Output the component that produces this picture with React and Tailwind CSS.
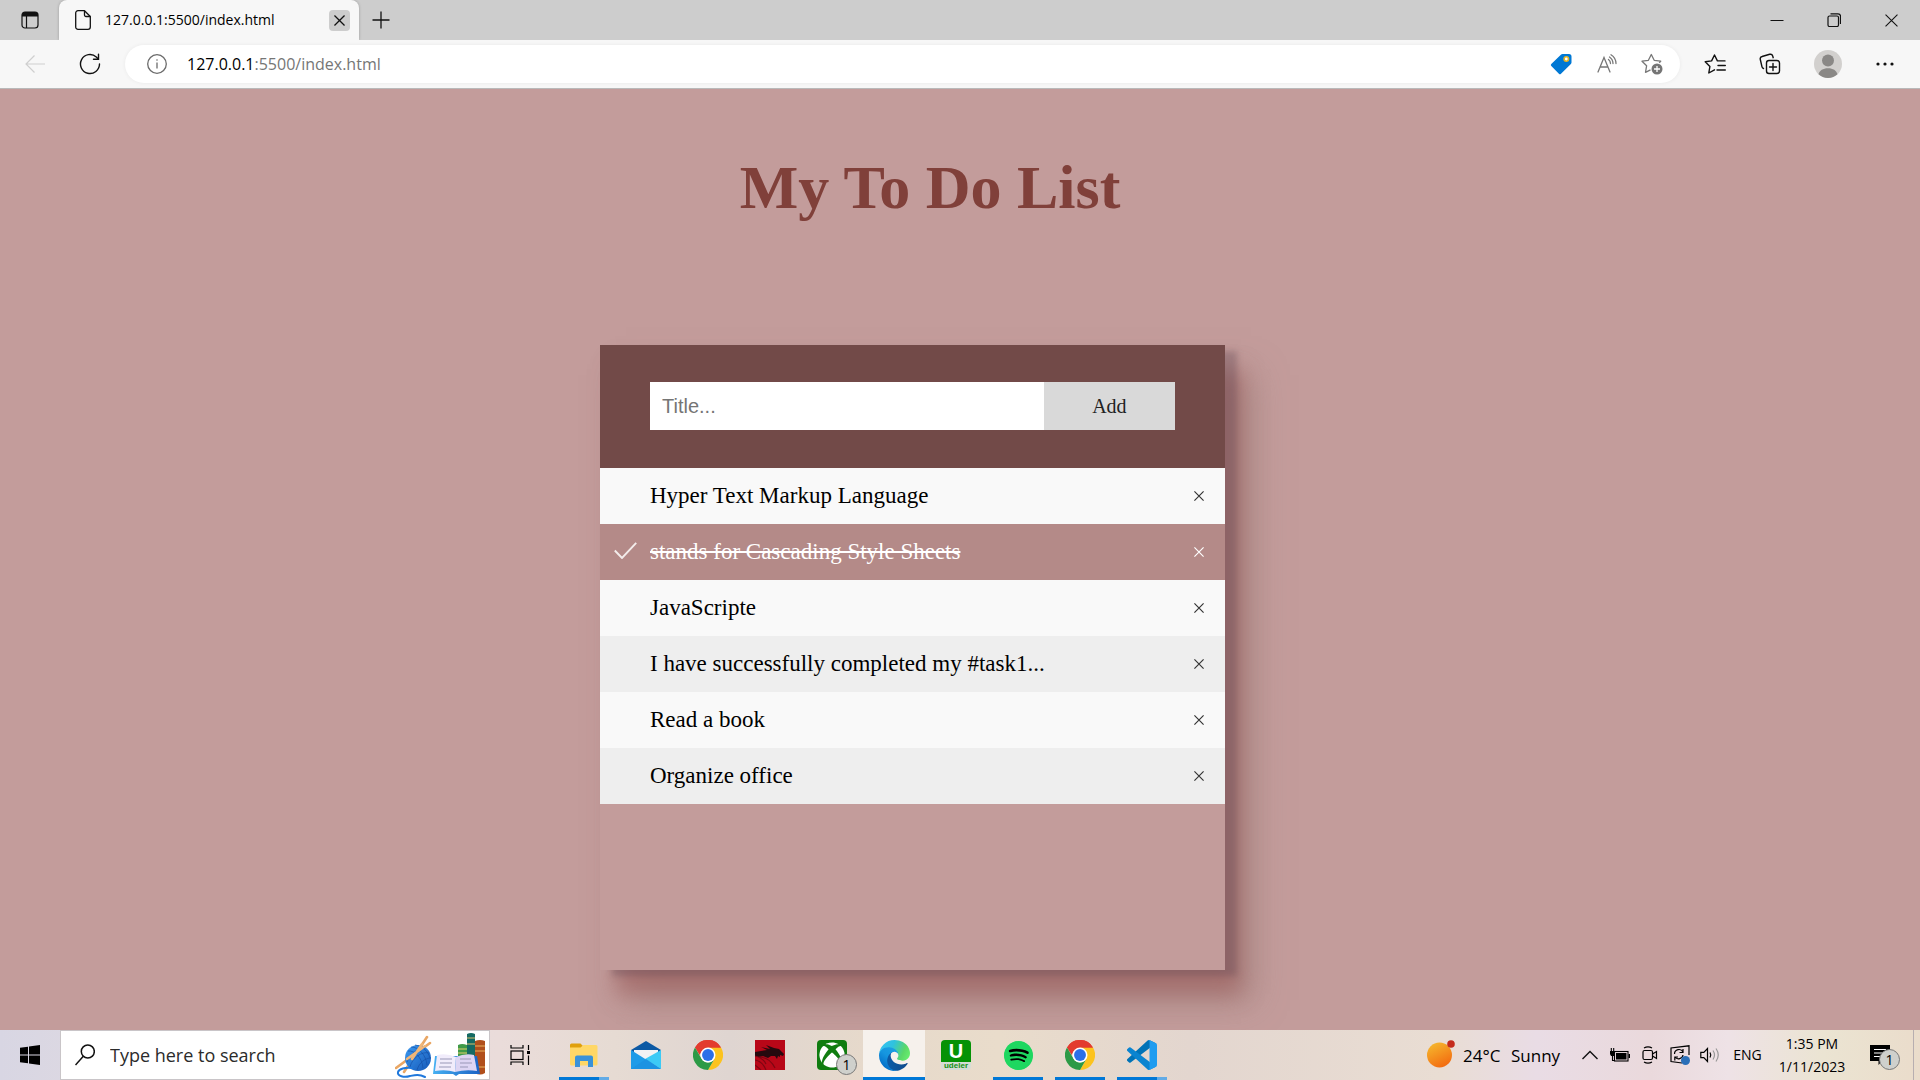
import React, { useState } from "react";
import { FaSpotify, FaXbox } from "react-icons/fa";

const UI = "font-['Open_Sans',sans-serif]";

/* ---------- browser icons ---------- */

const TabActionsIcon = () => (
  <svg width="18" height="18" viewBox="0 0 18 18" fill="none">
    <rect x="1" y="1" width="16" height="16" rx="3" stroke="#111" strokeWidth="1.2" />
    <path d="M1 4a3 3 0 0 1 3-3h10a3 3 0 0 1 3 3v1.5H1z" fill="#111" />
    <path d="M5.5 5v12" stroke="#111" strokeWidth="1.2" />
  </svg>
);

const PageIcon = () => (
  <svg width="16" height="20" viewBox="0 0 16 20" fill="none" stroke="#111" strokeWidth="1.3" strokeLinejoin="round">
    <path d="M3 .7h6.5L15.300 6.500V17a2.300 2.300 0 0 1-2.300 2.300H3A2.300 2.300 0 0 1 .7 17V3A2.300 2.300 0 0 1 3 .7z" />
    <path d="M9.500 .7V5a1.500 1.500 0 0 0 1.500 1.500h4.300" />
  </svg>
);

const CrossIcon = ({ size, color = "#111", width = 1.2 }) => (
  <svg width={size} height={size} viewBox="0 0 12 12" fill="none" stroke={color} strokeWidth={width}>
    <path d="M.5.5l11 11M11.5.5l-11 11" />
  </svg>
);

const PlusIcon = () => (
  <svg width="18" height="18" viewBox="0 0 18 18" fill="none" stroke="#111" strokeWidth="1.300">
    <path d="M9 .5v17M.5 9h17" />
  </svg>
);

const BackIcon = () => (
  <svg width="20" height="20" viewBox="0 0 20 20" fill="none" stroke="#cfcfcf" strokeWidth="1.2">
    <path d="M20 10H1M9.500 1.500L1 10l8.500 8.500" />
  </svg>
);

const ReloadIcon = () => (
  <svg width="22" height="22" viewBox="0 0 22 22" fill="none" stroke="#111" strokeWidth="1.4" strokeLinecap="round">
    <path d="M20.500 11a9.500 9.500 0 1 1-3.200-7.100L19.300 6" />
    <path d="M19.500 1.200V6.200H14.500" />
  </svg>
);

const InfoIcon = () => (
  <svg width="20" height="20" viewBox="0 0 20 20" fill="none" stroke="#6b6b6b" strokeWidth="1.3">
    <circle cx="10" cy="10" r="9.300" />
    <path d="M10 8.500v6" />
    <circle cx="10" cy="6" r=".8" fill="#6b6b6b" stroke="none" />
  </svg>
);

const TagIcon = () => (
  <svg width="22" height="22" viewBox="0 0 22 22">
    <path d="M12.500 1H19a2.500 2.500 0 0 1 2.500 2.500V9.500a2 2 0 0 1-.6 1.400L11 20.700a1.500 1.500 0 0 1-2.100 0L1.300 13a1.500 1.500 0 0 1 0-2.100l9.800-9.300A2 2 0 0 1 12.500 1z" fill="#0078d4" />
    <circle cx="16.300" cy="6" r="2.200" fill="#fff" stroke="#e6b422" strokeWidth="1.600" />
  </svg>
);

const ReadAloudIcon = () => (
  <svg width="20" height="20" viewBox="0 0 20 20" fill="none" stroke="#777" strokeWidth="1.3" strokeLinecap="round">
    <path d="M1 18L7 3.500 13 18M3 13h8" />
    <path d="M11.500 5.500a5 5 0 0 1 2 4M12.500 3a8 8 0 0 1 3.500 6.500M14 .8a10.500 10.500 0 0 1 5 8.700" />
  </svg>
);

const AddFavoriteIcon = () => (
  <svg width="22" height="22" viewBox="0 0 22 22" fill="none">
    <path d="M9.500 16.800L4.500 19.300l1.100-6.500L1 8.200l6.400-.9L10.300 1.500l2.900 5.800 6.500.9-1.500 1.500" stroke="#777" strokeWidth="1.3" strokeLinejoin="round" />
    <circle cx="16" cy="16" r="5.500" fill="#757575" />
    <path d="M16 13v6M13 16h6" stroke="#fff" strokeWidth="1.300" />
  </svg>
);

const FavoritesIcon = () => (
  <svg width="22" height="22" viewBox="0 0 22 22" fill="none" stroke="#111" strokeWidth="1.4" strokeLinejoin="round" strokeLinecap="round">
    <path d="M10.500 16.800L4.800 20l1.100-6.500L1.200 8.800l6.400-.9L10.500 2l2.900 5.900h7.600M14 12.500h7.300M13 17h8.300" />
  </svg>
);

const CollectionsIcon = () => (
  <svg width="22" height="22" viewBox="0 0 22 22" fill="none" stroke="#111" strokeWidth="1.4" strokeLinecap="round">
    <rect x="7.500" y="7.500" width="13" height="13" rx="2.500" />
    <path d="M14 10.500v7M10.500 14h7" />
    <path d="M4.500 15.500A2.500 2.500 0 0 1 3 13.800L1.300 6.500a2.500 2.500 0 0 1 1.800-3L10.700 1.300a2.500 2.500 0 0 1 3 1.700l.5 1.700" />
  </svg>
);

const AvatarIcon = () => (
  <svg width="28" height="28" viewBox="0 0 28 28">
    <circle cx="14" cy="14" r="14" fill="#d2d0ce" />
    <circle cx="14" cy="10.500" r="6" fill="#8a8886" />
    <path d="M4.500 24.300C5.500 20.500 9 18.300 14 18.300s8.500 2.200 9.500 6A14 14 0 0 1 14 28a14 14 0 0 1-9.500-3.700z" fill="#8a8886" />
  </svg>
);

const MoreIcon = () => (
  <svg width="18" height="4" viewBox="0 0 18 4" fill="#111">
    <circle cx="2" cy="2" r="1.600" />
    <circle cx="9" cy="2" r="1.600" />
    <circle cx="16" cy="2" r="1.600" />
  </svg>
);

const MinimizeIcon = () => (
  <svg width="14" height="14" viewBox="0 0 14 14" stroke="#111">
    <path d="M.5 7.500h13" />
  </svg>
);

const RestoreIcon = () => (
  <svg width="14" height="14" viewBox="0 0 14 14" fill="none" stroke="#111" strokeWidth="1.200">
    <rect x="1" y="3" width="10.500" height="10.500" rx="1.500" />
    <path d="M3.500.8H11a2.500 2.500 0 0 1 2.500 2.500V11" />
  </svg>
);

/* ---------- taskbar icons ---------- */

const WindowsIcon = () => (
  <svg width="20" height="20" viewBox="0 0 20 20" fill="#000">
    <path d="M0 2.800L8 1.700v7.800H0zM9 1.500L20 0v9.500H9zM0 10.500h8v7.800l-8-1.100zM9 10.500h11V20L9 18.500z" />
  </svg>
);

const SearchIcon = () => (
  <svg width="20" height="22" viewBox="0 0 20 22" fill="none" stroke="#111" strokeWidth="1.500">
    <circle cx="12.800" cy="7.500" r="6.500" />
    <path d="M8.300 12.300L.5 21" />
  </svg>
);

const YarnAndBooks = () => (
  <svg width="92" height="48" viewBox="0 0 92 48" fill="none">
    <defs>
      <linearGradient id="yarn" x1="0" y1="0" x2="1" y2="1">
        <stop offset="0" stopColor="#3d9af0" />
        <stop offset="1" stopColor="#1558b8" />
      </linearGradient>
      <linearGradient id="cover" x1="0" y1="0" x2="1" y2="0">
        <stop offset="0" stopColor="#45b0f2" />
        <stop offset="1" stopColor="#1b62c4" />
      </linearGradient>
    </defs>
    <path d="M32 6L9 41M35 12L1 37" stroke="#e9a765" strokeWidth="2.600" strokeLinecap="round" />
    <circle cx="23" cy="27" r="13" fill="url(#yarn)" />
    <path d="M13 20c6-1 14 6 15 17M16 16c8 0 15 8 16 18M20 14c7 1 13 6 15 13M12 31c3-8 12-15 18-14M15 36c2-9 12-16 19-14M22 39c2-7 8-12 14-12" stroke="#1650a8" strokeWidth=".7" />
    <path d="M27 13L17 28M30 15L12 28" stroke="#f0b678" strokeWidth="2.600" strokeLinecap="round" />
    <path d="M17 37c-7-1-13 1-14 4-1 4 6 6 12 4 5-1 9-2 15 1" stroke="#1f78dc" strokeWidth="2" strokeLinecap="round" />
    <path d="M72 3q4-2 8 0v34h-8z" fill="#146a63" />
    <path d="M72 7h8M72 13h8" stroke="#d9bd6a" strokeWidth="1.200" />
    <path d="M63 14q4-2 9 0v22h-9z" fill="#3f9a48" />
    <path d="M63 18h9M63 22h9" stroke="#e2d06e" strokeWidth="1.200" />
    <path d="M80 10q5-2 10 0v32q-5 3-10 0z" fill="#b04f1c" />
    <path d="M80 15h10M80 20h10M80 36h10" stroke="#e8b25c" strokeWidth="1.200" />
    <path d="M40 25l-2 18h20l3 2 3-2h21l-3-18z" fill="url(#cover)" />
    <path d="M42 24q10-2 19 2l-1 15q-9-3-20-1z" fill="#f1ecfb" />
    <path d="M61 26q9-4 18-2l3 16q-11-2-22 1z" fill="#ddd5f3" />
    <path d="M45 28h12M45 32h12M44 36h12M65 28h11M65 32h12M65 36h8" stroke="#9a98b8" strokeWidth="1.200" />
  </svg>
);

const TaskViewIcon = () => (
  <svg width="21" height="20" viewBox="0 0 21 20" fill="none" stroke="#000" strokeWidth="1.200">
    <rect x="1" y="6" width="12" height="8.500" />
    <path d="M1 0v3h12V0M1 20v-3h12v3M18.500 0v5M18.500 10.500V20" />
    <path d="M17 6h3v3h-3z" fill="#000" stroke="none" />
  </svg>
);

const ExplorerIcon = () => (
  <svg width="28" height="24" viewBox="0 0 28 24">
    <path d="M0 2a1.500 1.500 0 0 1 1.500-1.500h9L13 3v4H0z" fill="#e0a00c" />
    <path d="M0 4.500h10.500L13.500 2H26a1.500 1.500 0 0 1 1.500 1.500V21a1.500 1.500 0 0 1-1.500 1.500H1.500A1.500 1.500 0 0 1 0 21z" fill="#ffd766" />
    <path d="M5 24V14.500A2 2 0 0 1 7 12.500h14a2 2 0 0 1 2 2V24h-5v-6h-8v6z" fill="#3a92d8" />
  </svg>
);

const MailIcon = () => (
  <svg width="30" height="28" viewBox="0 0 30 28">
    <path d="M0 9L15 0l15 9-3 4H3z" fill="#0c59a4" />
    <path d="M3 9h24v6L15 21 3 14z" fill="#f2f2f4" />
    <path d="M0 9l30 19H0z" fill="#1e9be8" />
    <path d="M30 9v19L14 18z" fill="#3ccaf6" />
    <path d="M0 28h30L15 18z" fill="#1c93e2" />
  </svg>
);

const ChromeIcon = () => (
  <svg width="30" height="30" viewBox="0 0 48 48">
    <path d="M24 24L3.200 12A24 24 0 0 1 44.800 12z" fill="#e33b2e" />
    <path d="M24 12h20.800A24 24 0 0 1 24 48l10.400-18z" fill="#fcc31e" />
    <path d="M3.200 12A24 24 0 0 1 44.800 12H24A12 12 0 0 0 13.600 18L10.500 24z" fill="#e33b2e" />
    <path d="M3.200 12L13.600 30A12 12 0 0 0 34.400 30L24 48A24 24 0 0 1 3.200 12z" fill="#2c9a46" />
    <circle cx="24" cy="24" r="12" fill="#fff" />
    <circle cx="24" cy="24" r="9.500" fill="#2b6fe8" />
  </svg>
);

const DragonIcon = () => (
  <svg width="30" height="30" viewBox="0 0 30 30">
    <rect width="30" height="30" fill="#b80718" />
    <path d="M0 12l6-1 6-1-6-3 9 2-4-4 8 3 5 1 3 3 2 2-1 2-3-1 0 2-2-1-1 3-2-3-4 0-3 2-5-2-4 1-4-1z" fill="#26090e" />
    <path d="M0 16c5 1 9 4 11 8M0 20c6 1 9 5 11 10M4 17c8 0 13 5 16 11M0 25l6 5" stroke="#7d0612" strokeWidth="1.200" fill="none" />
  </svg>
);

const XboxIcon = () => (
  <span className="grid size-[30px] place-items-center rounded-sm bg-[#107c10] text-white">
    <FaXbox size={26} />
  </span>
);

const EdgeIcon = () => (
  <svg width="31" height="31" viewBox="0 0 256 256">
    <defs>
      <linearGradient id="edgeDeep" x1="0.2" y1="0.5" x2="1" y2="0.5">
        <stop offset="0" stopColor="#0c59a4" />
        <stop offset="1" stopColor="#114a8b" />
      </linearGradient>
      <linearGradient id="edgeBlue" x1="0.8" y1="0.2" x2="0.3" y2="1">
        <stop offset="0" stopColor="#1b9de2" />
        <stop offset="0.4" stopColor="#1595df" />
        <stop offset="1" stopColor="#0067c4" />
      </linearGradient>
      <linearGradient id="edgeGreen" x1="0" y1="0.3" x2="1" y2="0.6">
        <stop offset="0" stopColor="#35c1f1" />
        <stop offset="0.4" stopColor="#2fc2df" />
        <stop offset="0.8" stopColor="#5bd868" />
        <stop offset="1" stopColor="#66eb6e" />
      </linearGradient>
    </defs>
    <g transform="translate(-4.63 -4.92)">
      <path fill="url(#edgeDeep)" d="M235.680 195.460a93.730 93.730 0 0 1-10.540 4.710 101.870 101.870 0 0 1-35.900 6.460c-47.320 0-88.540-32.550-88.540-74.320A31.480 31.480 0 0 1 117.130 105c-42.800 1.800-53.800 46.400-53.800 72.530 0 73.880 68.090 81.370 82.760 81.370 7.910 0 19.840-2.300 27-4.560l1.310-.44a128.340 128.340 0 0 0 66.600-52.800 4 4 0 0 0-5.320-5.640z" />
      <path fill="url(#edgeBlue)" d="M110.340 246.340A79.200 79.200 0 0 1 87.600 225a80.720 80.720 0 0 1 29.530-120c3.120-1.470 8.450-4.130 15.540-4a32.350 32.350 0 0 1 25.690 13 31.880 31.880 0 0 1 6.360 18.660c0-.21 24.460-79.600-80-79.600-43.900 0-80 41.660-80 78.210a130.150 130.150 0 0 0 12.110 56 128 128 0 0 0 156.380 67.110 75.550 75.550 0 0 1-62.780-8z" />
      <path fill="url(#edgeGreen)" d="M156.940 153.780c-.81 1.050-3.300 2.500-3.300 5.660 0 2.610 1.700 5.120 4.720 7.230 14.380 10 41.490 8.680 41.560 8.680a59.560 59.560 0 0 0 30.270-8.350 61.380 61.380 0 0 0 30.430-52.880c.26-22.410-8-37.310-11.340-43.910C228.090 28.760 182.350 5 132.620 5a128 128 0 0 0-128 126.200c.48-36.540 36.800-66.050 80-66.050 3.500 0 23.460.34 42 10.070 16.340 8.580 24.900 18.940 30.850 29.210 6.180 10.670 7.280 24.150 7.280 29.520s-2.740 13.330-7.810 19.830z" />
    </g>
  </svg>
);

const UdelerIcon = () => (
  <span className="flex w-[30px] flex-col rounded-sm bg-[#d6dcd6] font-['Liberation_Sans',sans-serif] font-bold">
    <span className="grid h-[22px] place-items-center rounded-t-sm bg-[#059205] text-xl leading-[22px] text-white">U</span>
    <span className="h-2 text-center text-[8px] leading-[8px] text-[#159015]">udeler</span>
  </span>
);

const SpotifyIcon = () => (
  <span className="grid size-[29px] place-items-center rounded-full bg-[radial-gradient(circle,#000_60%,#1ed760_62%)] text-[#1ed760]">
    <FaSpotify size={29} />
  </span>
);

const CodeIcon = () => (
  <svg width="30" height="30" viewBox="0 0 100 100">
    <path fill="#0073b7" d="M96.460 10.800L75.860.88a6.230 6.230 0 0 0-7.110 1.200L1.300 63.580a4.170 4.170 0 0 0 0 6.170l5.510 5a4.170 4.170 0 0 0 5.320.24l81.230-61.620c2.730-2.070 6.640-.12 6.640 3.300v-.24a6.250 6.250 0 0 0-3.540-5.630z" />
    <path fill="#0a84d0" d="M96.460 89.200l-20.600 9.920a6.230 6.230 0 0 1-7.110-1.200L1.300 36.420a4.170 4.170 0 0 1 0-6.170l5.510-5a4.170 4.170 0 0 1 5.320-.24l81.230 61.620c2.730 2.070 6.640.12 6.640-3.300v.24a6.250 6.250 0 0 1-3.540 5.630z" />
    <path fill="#1f9cf0" d="M75.860 99.130a6.230 6.230 0 0 1-7.110-1.210c2.310 2.300 6.250.67 6.250-2.590V4.670c0-3.260-3.940-4.890-6.250-2.590A6.230 6.230 0 0 1 75.860.87l20.600 9.910A6.250 6.250 0 0 1 100 16.410v67.180a6.250 6.250 0 0 1-3.540 5.630z" />
  </svg>
);

const SunIcon = () => (
  <svg width="28" height="30" viewBox="0 0 28 30">
    <defs>
      <linearGradient id="sun" x1="0.2" y1="0" x2="0.7" y2="1">
        <stop offset="0" stopColor="#f5b82e" />
        <stop offset="1" stopColor="#f3690f" />
      </linearGradient>
    </defs>
    <circle cx="12.500" cy="15" r="12.500" fill="url(#sun)" />
    <circle cx="24" cy="4" r="3.800" fill="#c42b1c" />
  </svg>
);

const ChevronIcon = () => (
  <svg width="16" height="10" viewBox="0 0 16 10" fill="none" stroke="#111" strokeWidth="1.400">
    <path d="M.5 9L8 1.500 15.500 9" />
  </svg>
);

const BatteryIcon = () => (
  <svg width="20" height="14" viewBox="0 0 20 14" fill="none" stroke="#000" strokeWidth="1.100">
    <rect x="4.500" y="3.500" width="13.500" height="9.500" />
    <path d="M6 5h10.500v6.500H6zM18.500 6H20v4h-1.500zM0 3h5v3L4 8H1L0 6z" fill="#000" stroke="none" />
    <path d="M1.300 0v3M3.700 0v3M2.500 8v4.500h2" />
  </svg>
);

const MeetIcon = () => (
  <svg width="16" height="18" viewBox="0 0 16 18" fill="none" stroke="#000" strokeWidth="1.200">
    <rect x="1" y="4.500" width="9.500" height="9" rx="1.500" />
    <path d="M10.500 8l4-2.500v7l-4-2.500M2 2Q6 -.3 10 2M2 16q4 2.300 8 0" />
  </svg>
);

const SyncIcon = () => (
  <svg width="21" height="20" viewBox="0 0 21 20" fill="none" stroke="#000" strokeWidth="1.200">
    <path d="M12 18L1 16.500V3L19 .8V10M4.500 9a4.500 4.500 0 0 1 8.500-2M13 4v3.500H9.500M13 10a4.500 4.500 0 0 1-8 2M4.800 15.500V12H8" />
    <circle cx="15.500" cy="15.500" r="4.500" fill="#2a6fb8" stroke="none" />
  </svg>
);

const VolumeIcon = () => (
  <svg width="21" height="16" viewBox="0 0 21 16" fill="none" stroke="#000" strokeWidth="1.200">
    <path d="M.8 5.300h3L7.500 1.500v13L3.800 10.700h-3z" />
    <path d="M10 5.500q1.600 2.500 0 5" />
    <path d="M13 3.500q3 4.500 0 9M16 1.500q4.500 6.500 0 13" stroke="#999" />
  </svg>
);

const NoticeIcon = () => (
  <svg width="20" height="20" viewBox="0 0 20 20">
    <path d="M0 0h20v16h-8l-3.500 4v-4H0z" fill="#000" />
    <path d="M4 4.500h12M4 8h12M4 11.500h8" stroke="#fff" strokeWidth="1.100" />
  </svg>
);

const CountBadge = ({ children }) => (
  <span className="absolute -right-[10px] -bottom-[5px] grid size-[21px] place-items-center rounded-full border border-[#777] bg-[#cfd0cc] text-sm leading-none text-black">
    {children}
  </span>
);

/* ---------- sections ---------- */

const IconButton = ({ label, className, onClick, children }) => (
  <button type="button" aria-label={label} onClick={onClick} className={`grid shrink-0 place-items-center ${className}`}>
    {children}
  </button>
);

function TabStrip() {
  return (
    <div className="flex h-10 items-stretch bg-[#cdcdcd]">
      <IconButton label="Tab actions menu" className="w-[59px]">
        <TabActionsIcon />
      </IconButton>
      <div className="flex w-[300px] items-center rounded-t-lg bg-[#f7f7f7] pr-[9px] pl-4 shadow-[0_0_3px_rgba(0,0,0,0.25)]">
        <PageIcon />
        <span className="ml-[14px] flex-1 text-sm whitespace-nowrap text-black">127.0.0.1:5500/index.html</span>
        <IconButton label="Close tab" className="size-[21px] rounded-sm bg-[#cdcdcd]">
          <CrossIcon size={11} width={1.4} />
        </IconButton>
      </div>
      <IconButton label="New tab" className="w-[43px]">
        <PlusIcon />
      </IconButton>
      <div className="ml-auto flex">
        <IconButton label="Minimize" className="w-[57px]">
          <MinimizeIcon />
        </IconButton>
        <IconButton label="Restore" className="w-[57px]">
          <RestoreIcon />
        </IconButton>
        <IconButton label="Close" className="w-[58px]">
          <CrossIcon size={13} width={1} />
        </IconButton>
      </div>
    </div>
  );
}

function AddressBar() {
  return (
    <div className="relative flex h-[49px] items-center border-b border-[#b9b9b9] bg-[#f7f7f7] pl-2">
      <IconButton label="Back" className="h-9 w-[54px]">
        <BackIcon />
      </IconButton>
      <IconButton label="Reload" className="h-9 w-[56px]">
        <ReloadIcon />
      </IconButton>
      <div className="ml-[7px] flex h-[38px] flex-1 items-center rounded-full bg-white pr-[6px] pl-[22px] shadow-[0_0_4px_rgba(0,0,0,0.06)]">
        <InfoIcon />
        <span className="ml-5 flex-1 pb-px text-base whitespace-nowrap text-[#767676]">
          <span className="text-black">127.0.0.1</span>:5500/index.html
        </span>
        <IconButton label="Shopping" className="w-[46px]">
          <TagIcon />
        </IconButton>
        <IconButton label="Read aloud" className="w-[45px]">
          <ReadAloudIcon />
        </IconButton>
        <IconButton label="Add to favorites" className="w-[45px]">
          <AddFavoriteIcon />
        </IconButton>
      </div>
      <IconButton label="Favorites" className="ml-[7px] w-14">
        <FavoritesIcon />
      </IconButton>
      <IconButton label="Collections" className="w-[54px]">
        <CollectionsIcon />
      </IconButton>
      <IconButton label="Profile" className="w-[62px]">
        <AvatarIcon />
      </IconButton>
      <IconButton label="Settings and more" className="mr-[9px] w-[52px]">
        <MoreIcon />
      </IconButton>
    </div>
  );
}

const START_ITEMS = [
  { text: "Hyper Text Markup Language", done: false },
  { text: "stands for Cascading Style Sheets", done: true },
  { text: "JavaScripte", done: false },
  { text: "I have successfully completed my #task1...", done: false },
  { text: "Read a book", done: false },
  { text: "Organize office", done: false },
];

function TodoItem({ item, onToggle, onRemove }) {
  const tone = item.done
    ? "bg-[#b48a88] text-white"
    : "text-black odd:bg-[#f9f9f9] even:bg-[#eeeeee]";
  return (
    <li className={`flex h-14 items-center ${tone}`}>
      <button type="button" onClick={onToggle} className="flex h-full flex-1 items-center text-left">
        <span className="grid w-[50px] place-items-center pb-1">
          {item.done && (
            <svg width="23" height="17" viewBox="0 0 23 17" fill="none" stroke="#f3eceb" strokeWidth="1.900">
              <path d="M.8 8.500L8 16 22.200.8" />
            </svg>
          )}
        </span>
        <span className={item.done ? "line-through" : ""}>{item.text}</span>
      </button>
      <IconButton label={`Remove ${item.text}`} onClick={onRemove} className="h-full w-[52px]">
        <CrossIcon size={10} color={item.done ? "#fff" : "#333"} width={1.4} />
      </IconButton>
    </li>
  );
}

function TodoPage() {
  const [items, setItems] = useState(START_ITEMS);
  const [title, setTitle] = useState("");

  const add = (e) => {
    e.preventDefault();
    if (title.trim()) {
      setItems([...items, { text: title, done: false }]);
      setTitle("");
    }
  };

  return (
    <main className="flex-1 overflow-hidden bg-[#c39c9b] pb-15 font-['Liberation_Serif',serif]">
      <h1 className="pt-15 pr-15 text-center text-[62px] leading-[76px] font-bold text-[#80403a]">My To Do List</h1>
      <section className="mt-30 ml-[31.25%] min-h-[625px] w-[625px] bg-[#c39c9b] shadow-[12px_6px_6px_rgba(100,75,85,0.35),16px_24px_20px_rgba(160,88,88,0.5),26px_30px_32px_rgba(150,122,117,0.6)]">
        <form onSubmit={add} className="flex h-[123px] items-center bg-[#724a48] px-[50px] pb-px">
          <input
            aria-label="Title"
            placeholder="Title..."
            value={title}
            onChange={(e) => setTitle(e.target.value)}
            className="h-12 w-3/4 bg-white px-3 font-['Liberation_Sans',sans-serif] text-xl text-black outline-none placeholder:text-[#757575]"
          />
          <button type="submit" className="h-12 w-1/4 bg-[#d9d9d9] text-xl text-[#222]">
            Add
          </button>
        </form>
        <ul className="text-[23px] leading-7">
          {items.map((item, i) => (
            <TodoItem
              key={item.text}
              item={item}
              onToggle={() => setItems(items.map((it, j) => (j === i ? { ...it, done: !it.done } : it)))}
              onRemove={() => setItems(items.filter((_, j) => j !== i))}
            />
          ))}
        </ul>
      </section>
    </main>
  );
}

const APPS = [
  { name: "File Explorer", icon: <ExplorerIcon />, running: true, stacked: true },
  { name: "Mail", icon: <MailIcon /> },
  { name: "Google Chrome", icon: <ChromeIcon /> },
  { name: "Dragon", icon: <DragonIcon /> },
  { name: "Xbox", icon: <XboxIcon />, badge: "1" },
  { name: "Microsoft Edge", icon: <EdgeIcon />, active: true },
  { name: "Udeler", icon: <UdelerIcon /> },
  { name: "Spotify", icon: <SpotifyIcon />, running: true },
  { name: "Chrome window", icon: <ChromeIcon />, running: true },
  { name: "Visual Studio Code", icon: <CodeIcon />, running: true, stacked: true },
];

function TaskbarApp({ app }) {
  return (
    <button
      type="button"
      aria-label={app.name}
      className={`relative grid h-full w-[62px] place-items-center ${app.active ? "bg-[#f6f1ec]" : ""}`}
    >
      <span className="relative">
        {app.icon}
        {app.badge && <CountBadge>{app.badge}</CountBadge>}
      </span>
      {(app.running || app.active) && (
        <span className={`absolute bottom-0 flex h-[3px] ${app.active ? "inset-x-0" : "inset-x-[6px]"}`}>
          <span className="flex-1 bg-[#0078d7]" />
          {app.stacked && <span className="w-[10px] bg-[#62abe6]" />}
        </span>
      )}
    </button>
  );
}

function Taskbar() {
  return (
    <footer className="flex h-[50px] items-stretch bg-[linear-gradient(90deg,#d8d6e3_0%,#dcd8e2_4%,#eadcda_26%,#e6dbd3_32%,#dfd5d1_38%,#e6d9cb_45%,#e9dccb_52%,#e3d6cf_62%,#e9ddd3_75%,#e9dce5_80%,#ead9dc_86%,#eee2e6_90%,#ebe4d2_95%,#eadccb_100%)] text-black">
      <IconButton label="Start" className="w-[60px]">
        <WindowsIcon />
      </IconButton>
      <label className="flex w-[430px] items-center border border-[#c9c5c8] bg-white pr-[2px] pl-[14px]">
        <SearchIcon />
        <input
          aria-label="Search"
          placeholder="Type here to search"
          className="ml-[15px] min-w-0 flex-1 text-lg outline-none placeholder:text-[#2b2b2b]"
        />
        <YarnAndBooks />
      </label>
      <IconButton label="Task view" className="w-[63px] pr-[2px]">
        <TaskViewIcon />
      </IconButton>
      {APPS.map((app) => (
        <TaskbarApp key={app.name} app={app} />
      ))}
      <div className="ml-auto flex items-center">
        <button type="button" className="flex items-center text-[17px] whitespace-nowrap">
          <SunIcon />
          <span className="ml-2 w-12 pt-px text-left">24°C</span>
          <span className="w-16 pt-px text-left">Sunny</span>
        </button>
        <IconButton label="Show hidden icons" className="w-[30px]">
          <ChevronIcon />
        </IconButton>
        <IconButton label="Battery" className="w-[30px]">
          <BatteryIcon />
        </IconButton>
        <IconButton label="Meet now" className="w-[30px]">
          <MeetIcon />
        </IconButton>
        <IconButton label="Updates" className="w-[30px]">
          <SyncIcon />
        </IconButton>
        <IconButton label="Volume" className="w-[30px]">
          <VolumeIcon />
        </IconButton>
        <button type="button" className="w-[45px] text-sm">ENG</button>
        <button type="button" className="w-[84px] text-center text-sm leading-[23px]">
          <span className="block">1:35 PM</span>
          <span className="block">1/11/2023</span>
        </button>
        <button type="button" aria-label="Notifications" className="ml-4 h-full w-11 border-r border-[#b7aeb0]">
          <span className="relative block size-5">
            <NoticeIcon />
            <CountBadge>1</CountBadge>
          </span>
        </button>
        <span className="w-[6px]" />
      </div>
    </footer>
  );
}

export default function App() {
  return (
    <div className={`flex min-h-screen flex-col ${UI}`}>
      <header>
        <TabStrip />
        <AddressBar />
      </header>
      <TodoPage />
      <Taskbar />
    </div>
  );
}
